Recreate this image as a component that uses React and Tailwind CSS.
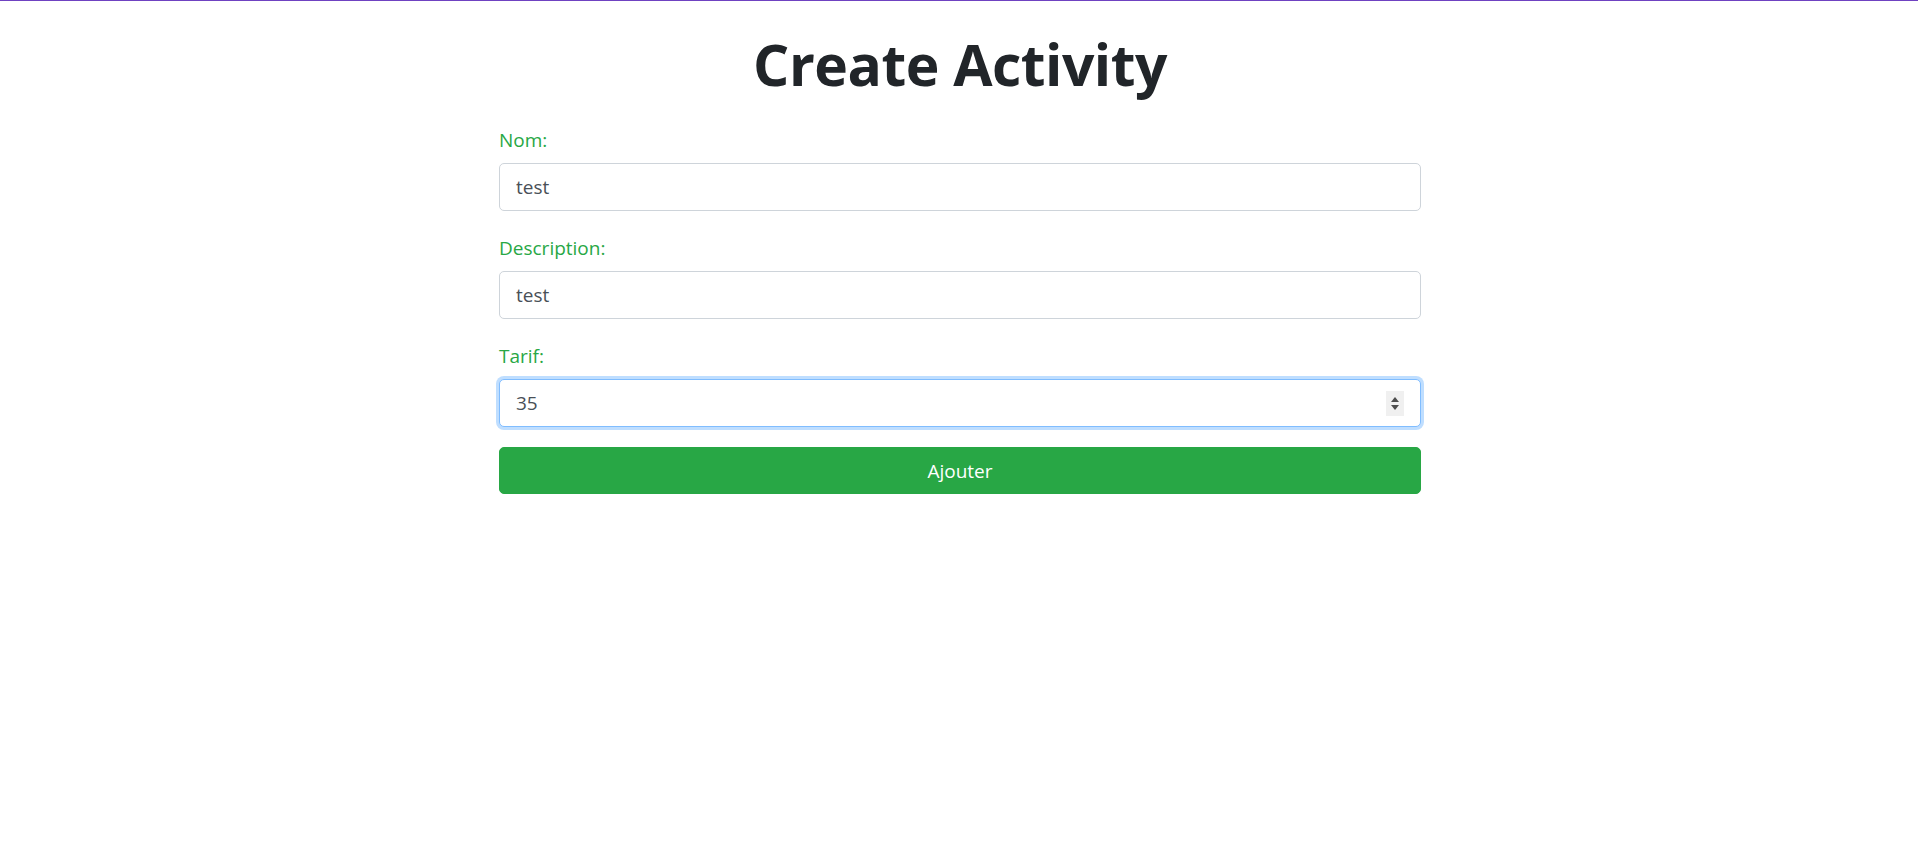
import { useState } from "react";

const fields = [
  { key: "nom", label: "Nom:", type: "text" },
  { key: "description", label: "Description:", type: "text" },
];

export default function App() {
  const [form, setForm] = useState({ nom: "test", description: "test", tarif: "35" });
  const update = (key, val) => setForm((f) => ({ ...f, [key]: val }));

  const step = (d) => update("tarif", String((parseFloat(form.tarif) || 0) + d));

  return (
    <div className="min-h-[867px] bg-white border-t border-[#6f42c1] font-['Open_Sans',sans-serif]">
      <div className="w-[922px] mx-auto translate-x-[1px]">
        <h1 className="text-center text-[57px] leading-[1.2] font-bold text-[#212529] pt-[29px] mb-[27px] tracking-[-0.5px]">
          Create Activity
        </h1>

        <form onSubmit={(e) => e.preventDefault()}>
          {fields.map((f) => (
            <div key={f.key} className="mb-[22px]">
              <label className="block text-[19px] leading-[30px] text-[#28a745] mb-[8px]">{f.label}</label>
              <input
                type={f.type}
                value={form[f.key]}
                onChange={(e) => update(f.key, e.target.value)}
                className="block w-full h-[48px] px-4 text-[19px] text-[#495057] bg-white border border-[#ced4da] rounded-[5px] outline-none"
              />
            </div>
          ))}

          <div className="mb-[20px]">
            <label className="block text-[19px] leading-[30px] text-[#28a745] mb-[8px]">Tarif:</label>
            <div className="flex items-center h-[48px] pl-4 pr-4 bg-white border border-[#80bdff] rounded-[5px] ring-[3px] ring-[#bfdeff]">
              <input
                type="text"
                value={form.tarif}
                onChange={(e) => update("tarif", e.target.value)}
                className="flex-1 min-w-0 text-[19px] text-[#495057] outline-none bg-transparent"
              />
              <div className="flex flex-col items-center justify-center gap-[3px] w-[18px] h-[25px] bg-[#f0f0f0]">
                <svg width="8" height="5" viewBox="0 0 8 5" onClick={() => step(1)}>
                  <path d="M4 0 L8 5 L0 5 Z" fill="#4d4d4d" />
                </svg>
                <svg width="8" height="5" viewBox="0 0 8 5" onClick={() => step(-1)}>
                  <path d="M0 0 L8 0 L4 5 Z" fill="#4d4d4d" />
                </svg>
              </div>
            </div>
          </div>

          <button
            type="submit"
            className="block w-full h-[47px] text-[19px] text-white bg-[#28a745] border border-[#28a745] rounded-[5px]"
          >
            Ajouter
          </button>
        </form>
      </div>
    </div>
  );
}
